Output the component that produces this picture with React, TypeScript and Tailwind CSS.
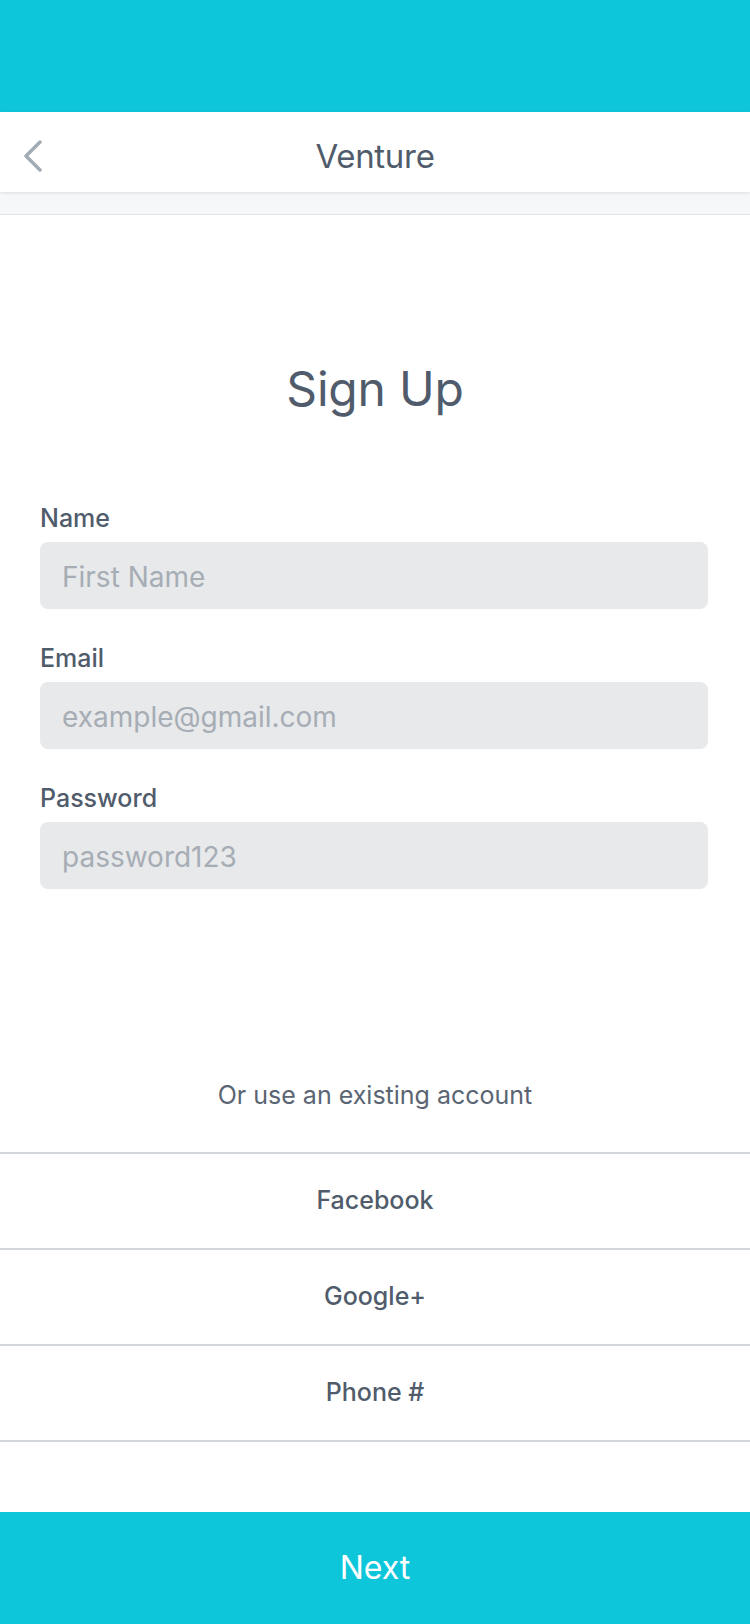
import React from "react";

const font = { fontFamily: "Inter, 'Noto Sans', sans-serif" };

function Field({ label, placeholder, first }: { label: string; placeholder: string; first?: boolean }) {
  return (
    <div className={first ? "" : "mt-[37px]"}>
      <div className="h-[25px] text-[25px] leading-[25px] font-medium text-[#505c6b] mb-[11px]">{label}</div>
      <div className="h-[67px] rounded-[8px] bg-[#e8e9eb] flex items-center pl-[22px] pt-[2px] text-[28px] leading-[34px] text-[#a6adb5]">
        {placeholder}
      </div>
    </div>
  );
}

function Row({ text }: { text: string }) {
  return (
    <div className="h-[96px] flex items-center justify-center text-[25px] font-medium text-[#505c6b] border-b-2 border-[#d3d7db]">
      {text}
    </div>
  );
}

export default function App() {
  return (
    <div className="min-h-[1624px] w-[750px] bg-white flex flex-col" style={font}>
      <div className="h-[112px] bg-[#0ec6da]" />
      <div className="relative z-10 h-[80px] bg-white grid grid-cols-[80px_1fr_80px] items-center pt-2 shadow-[0_1px_3px_rgba(0,0,0,0.10)]">
        <div className="pl-[22px] flex items-center">
          <svg width="22" height="32" viewBox="0 0 22 32" fill="none">
            <path d="M18 2 L4 16 L18 30" stroke="#a3acb4" strokeWidth="3.5" strokeLinecap="round" strokeLinejoin="round" />
          </svg>
        </div>
        <div className="text-center text-[33px] leading-[40px] text-[#505c6b] tracking-[-0.3px]">Venture</div>
        <div />
      </div>
      <div className="h-[23px] bg-[#f6f7f9] border-b border-[#e2e4e7]" />

      <div className="mt-[150px] text-center text-[48px] leading-[48px] text-[#505c6b] tracking-[-0.2px]">Sign Up</div>

      <div className="mt-[93px] pl-[40px] pr-[42px]">
        <Field label="Name" placeholder="First Name" first />
        <Field label="Email" placeholder="example@gmail.com" />
        <Field label="Password" placeholder="password123" />
      </div>

      <div className="mt-[194px] text-center text-[25px] leading-[25px] text-[#5a6573]">Or use an existing account</div>

      <div className="mt-[44px] border-t-2 border-[#d3d7db]">
        <Row text="Facebook" />
        <Row text="Google+" />
        <Row text="Phone #" />
      </div>

      <div className="mt-auto h-[112px] bg-[#0ec6da] flex items-center justify-center text-[32px] text-white">Next</div>
    </div>
  );
}
